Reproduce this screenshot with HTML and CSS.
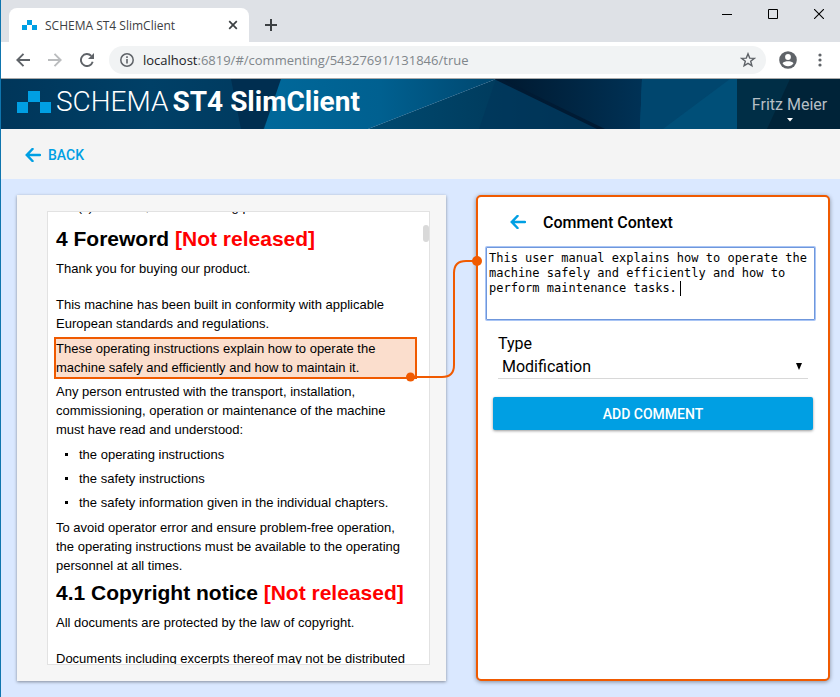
FILE: index.html
```html
<!DOCTYPE html>
<html lang="en">
<head>
<meta charset="utf-8">
<meta name="viewport" content="width=device-width, initial-scale=1">
<title>SCHEMA ST4 SlimClient</title>
<link rel="stylesheet" href="styles.css">
</head>
<body>
<div class="tabstrip">
  <div class="tab">
    <svg class="favicon" width="15" height="10" viewBox="0 0 15 10" aria-hidden="true"><path fill="#009fe3" d="M5 0h5v5H5zM0 5h5v5H0zM10 5h5v5h-5z"/></svg>
    <span class="tab-title">SCHEMA ST4 SlimClient</span>
    <button class="icon-btn" aria-label="Close tab"><svg width="10" height="10" viewBox="0 0 10 10"><path d="M1.2 1.2l7.6 7.6M8.800 1.2l-7.6 7.6" stroke="#3c4043" stroke-width="1.7"/></svg></button>
  </div>
  <button class="icon-btn new-tab" aria-label="New tab"><svg width="12" height="12" viewBox="0 0 12 12"><path d="M6 0v12M0 6h12" stroke="#3c4043" stroke-width="2"/></svg></button>
  <div class="window-controls">
    <button class="icon-btn" aria-label="Minimize"><svg width="10" height="10" viewBox="0 0 10 10"><path d="M0 5.500h10" stroke="#000"/></svg></button>
    <button class="icon-btn" aria-label="Maximize"><svg width="10" height="10" viewBox="0 0 10 10"><path d="M.5.5h9v9h-9z" fill="none" stroke="#000"/></svg></button>
    <button class="icon-btn" aria-label="Close"><svg width="10" height="10" viewBox="0 0 10 10"><path d="M0 0l10 10M10 0L0 10" stroke="#000" stroke-width="1.1"/></svg></button>
  </div>
</div>
<div class="toolbar">
  <button class="icon-btn" aria-label="Back"><svg width="14" height="14" viewBox="0 0 14 14"><path d="M14 7H1.500M7.500 .8L1.300 7l6.200 6.200" fill="none" stroke="#5f6368" stroke-width="1.9"/></svg></button>
  <button class="icon-btn" aria-label="Forward"><svg width="14" height="14" viewBox="0 0 14 14"><path d="M0 7h12.500M6.500 .8L12.700 7l-6.200 6.200" fill="none" stroke="#babcbe" stroke-width="1.900"/></svg></button>
  <button class="icon-btn" aria-label="Reload"><svg width="14" height="14" viewBox="0 0 14 14"><path d="M12.700 8.800A6 6 0 1 1 11.300 2.900" fill="none" stroke="#5f6368" stroke-width="1.900"/><path d="M14 0v6H8z" fill="#5f6368"/></svg></button>
  <div class="omnibox">
    <svg width="14" height="14" viewBox="0 0 14 14" aria-hidden="true"><circle cx="7" cy="7" r="6.200" fill="none" stroke="#5f6368" stroke-width="1.500"/><path d="M7 6v4.500M7 3.300v1.700" stroke="#5f6368" stroke-width="1.600"/></svg>
    <span class="url"><b>localhost</b>:6819/#/commenting/54327691/131846/true</span>
    <button class="icon-btn" aria-label="Bookmark"><svg width="16" height="16" viewBox="0 0 16 16"><path d="M8 1.800l1.700 4.300 4.600.3-3.600 2.900 1.200 4.500L8 11.300l-3.900 2.500 1.200-4.500L1.700 6.400l4.600-.3z" fill="none" stroke="#5f6368" stroke-width="1.400"/></svg></button>
  </div>
  <button class="icon-btn" aria-label="Profile"><svg width="18" height="18" viewBox="0 0 18 18"><circle cx="9" cy="9" r="8.800" fill="#5f6368"/><circle cx="9" cy="6" r="2.900" fill="#fff"/><path d="M3.500 12.300C4.500 10.700 7 10.200 9 10.200s4.500.5 5.500 2.100C13.300 14.200 11.300 15.300 9 15.300s-4.300-1.100-5.500-3z" fill="#fff"/></svg></button>
  <button class="icon-btn menu" aria-label="Menu"><svg width="4" height="14" viewBox="0 0 4 14"><g fill="#5f6368"><circle cx="2" cy="2" r="1.600"/><circle cx="2" cy="7" r="1.600"/><circle cx="2" cy="12" r="1.600"/></g></svg></button>
</div>

<header class="app-header">
  <svg class="backdrop" viewBox="0 0 839 50" preserveAspectRatio="none" aria-hidden="true">
    <defs>
      <linearGradient id="a"><stop offset="0" stop-color="#00365a"/><stop offset=".5" stop-color="#004067"/><stop offset="1" stop-color="#00385c"/></linearGradient>
      <linearGradient id="b"><stop offset="0" stop-color="#00689a"/><stop offset=".5" stop-color="#006090"/><stop offset="1" stop-color="#00476f"/></linearGradient>
      <linearGradient id="c"><stop offset="0" stop-color="#00182e"/><stop offset="1" stop-color="#003256"/></linearGradient>
      <linearGradient id="d"><stop offset="0" stop-color="#004a70"/><stop offset="1" stop-color="#00304f"/></linearGradient>
    </defs>
    <path fill="url(#a)" d="M0 0h300v50H0z"/>
    <path fill="#002e50" d="M230 0h52l-20 50h-22z"/>
    <path fill="url(#b)" d="M280 0h215L367 50H263z"/>
    <path fill="url(#d)" d="M495 0L367 50h235z"/>
    <path fill="#00365a" opacity=".6" d="M495 0l-17 50h124z"/>
    <path fill="url(#c)" d="M495 0h147v50h-40z"/>
    <path fill="#001b34" d="M493 0h8l103 50h-8z"/>
    <path fill="#004f78" d="M641 0h198v50H639z"/>
    <path fill="#00466e" d="M641 0h88l-67 50h-23z"/>
    <path fill="#002e46" d="M736 0h103v50H736z"/>
    <path fill="#002338" d="M789 0h50v50h-73z"/>
  </svg>
  <div class="brand">
    <svg width="34" height="22" viewBox="0 0 34 22" aria-hidden="true"><path fill="#009fe3" d="M11 0h12v11H11zM0 11h11v11H0zM23 11h11v11H23z"/></svg>
    <span class="brand-text"><span class="thin">SCHEMA</span><b>ST4 SlimClient</b></span>
  </div>
  <button class="user">Fritz Meier<svg width="6" height="4" viewBox="0 0 6 4" aria-hidden="true"><path d="M0 0h6L3 3.500z" fill="#fff"/></svg></button>
</header>

<nav class="backbar">
  <a href="#"><svg width="16" height="14" viewBox="0 0 16 14" aria-hidden="true"><path d="M15 7H2M7.500 1L1.800 7l5.700 6" fill="none" stroke="#009fe3" stroke-width="2.500" stroke-linecap="round"/></svg>BACK</a>
</nav>

<main>
  <section class="doc-panel">
    <article class="doc">
      <p class="cut">&nbsp; &nbsp; &nbsp; (s) machine, commissioning parts</p>
      <h2>4 Foreword <em>[Not released]</em></h2>
      <p>Thank you for buying our product.</p>
      <p class="spaced">This machine has been built in conformity with applicable European standards and regulations.</p>
      <p class="marked">These operating instructions explain how to operate the machine safely and efficiently and how to maintain it.</p>
      <p>Any person entrusted with the transport, installation, commissioning, operation or maintenance of the machine must have read and understood:</p>
      <ul>
        <li>the operating instructions</li>
        <li>the safety instructions</li>
        <li>the safety information given in the individual chapters.</li>
      </ul>
      <p>To avoid operator error and ensure problem-free operation, the operating instructions must be available to the operating personnel at all times.</p>
      <h2>4.1 Copyright notice <em>[Not released]</em></h2>
      <p>All documents are protected by the law of copyright.</p>
      <p class="spaced">Documents including excerpts thereof may not be distributed</p>
      <span class="thumb"></span>
    </article>
  </section>

  <section class="comment-panel">
    <svg class="connector" width="76" height="128" viewBox="0 0 76 128" aria-hidden="true">
      <path d="M4 122h32q12 0 12-12V18q0-12 12-12h11" fill="none" stroke="#f05a00" stroke-width="2"/>
      <circle cx="4.500" cy="122" r="4.500" fill="#f05a00"/><circle cx="71" cy="6" r="5" fill="#f05a00"/>
    </svg>
    <div class="comment-head">
      <a href="#" aria-label="Back"><svg width="16" height="14" viewBox="0 0 16 14"><path d="M15 7H2M7.500 1L1.800 7l5.700 6" fill="none" stroke="#009fe3" stroke-width="2.500" stroke-linecap="round"/></svg></a>
      <h1 id="context">Comment Context</h1>
    </div>
    <div class="field">
      <textarea aria-labelledby="context">This user manual explains how to operate the
machine safely and efficiently and how to
perform maintenance tasks.</textarea>
      <span class="caret"></span>
    </div>
    <div class="type">
      <label for="type">Type</label>
      <div class="select-wrap">
        <select id="type"><option>Modification</option></select>
        <svg width="6" height="7" viewBox="0 0 6 7" aria-hidden="true"><path d="M0 0h6L3 7z"/></svg>
      </div>
    </div>
    <button class="primary">ADD COMMENT</button>
  </section>
</main>
</body>
</html>
```
FILE: styles.css
```css
* { box-sizing: border-box; }

body {
  margin: 0;
  height: 100vh;
  display: flex;
  flex-direction: column;
  border-left: 1px solid #0f75ae;
  background: #dae8ff;
  color: #000;
  font-family: Roboto, "Liberation Sans", sans-serif;
  font-size: 16px;
  overflow: hidden;
}

button, select, textarea { font: inherit; border: 0; }
h1, h2, p, ul { margin: 0; padding: 0; }
svg { display: block; flex: none; }
a { color: #009fe3; text-decoration: none; }

.icon-btn { padding: 0; background: none; flex: none; }

/* Browser frame */
.tabstrip {
  display: flex;
  flex: none;
  height: 42px;
  padding-left: 8px;
  background: #dee1e6;
}
.tab {
  display: flex;
  align-items: center;
  width: 240px;
  margin-top: 8px;
  padding: 0 11px 0 13px;
  border-radius: 8px 8px 0 0;
  background: #fff;
}
.tab-title {
  flex: 1;
  margin-left: 8px;
  color: #3c4043;
  font-family: "Open Sans", "Noto Sans", sans-serif;
  font-size: 12px;
}
.new-tab { margin: 8px 0 0 16px; }
.window-controls {
  display: flex;
  align-items: flex-start;
  gap: 36px;
  margin-left: auto;
  padding: 9px 16px 0 0;
}
.toolbar {
  display: flex;
  align-items: center;
  flex: none;
  height: 37px;
  gap: 18px;
  padding: 0 18px 0 15px;
  border-bottom: 1px solid #a9a9a9;
  background: #fff;
}
.omnibox {
  display: flex;
  align-items: center;
  flex: 1;
  height: 28px;
  margin: 0 -5px 0 -3px;
  padding: 0 10px 0 11px;
  border-radius: 14px;
  background: #f1f3f4;
}
.url {
  flex: 1;
  margin-left: 9px;
  color: #80868b;
  font-family: "Open Sans", "Noto Sans", sans-serif;
  font-size: 13px;
}
.url b { color: #202124; font-weight: 400; }
.menu { margin-left: 3px; }

/* Application header */
.app-header {
  position: relative;
  display: flex;
  flex: none;
  justify-content: space-between;
  height: 50px;
}
.backdrop {
  position: absolute;
  inset: 0;
  width: 100%;
  height: 100%;
}
.brand {
  position: relative;
  display: flex;
  align-items: center;
  gap: 5px;
  padding: 0 0 4px 16px;
  color: #fff;
}
.brand-text {
  display: flex;
  gap: 4px;
  font-size: 28px;
  line-height: 32px;
  white-space: nowrap;
}
.thin { font-weight: 300; }
.user {
  position: relative;
  display: flex;
  flex-direction: column;
  align-items: center;
  width: 103px;
  padding: 16px 0 0 2px;
  background: none;
  color: #b6bfc5;
  line-height: 19px;
}
.user svg { margin-top: 4px; }

.backbar {
  display: flex;
  flex: none;
  align-items: center;
  height: 50px;
  padding: 2px 0 0 24px;
  background: #f4f4f4;
}
.backbar a {
  display: flex;
  align-items: center;
  gap: 7px;
  font-size: 14px;
  font-weight: 500;
}

/* Work area */
main {
  display: grid;
  grid-template-columns: minmax(0, 429fr) minmax(0, 354fr);
  grid-template-rows: minmax(0, 1fr);
  gap: 30px;
  flex: 1;
  min-height: 0;
  padding: 16px 10px 16px 16px;
}
.doc-panel {
  padding: 16px 16px 16px 30px;
  background: #f6f6f6;
  box-shadow: 0 1px 3px rgba(0, 0, 0, .4);
}
.doc {
  position: relative;
  height: 100%;
  padding: 0 14px 0 8px;
  border: 1px solid #e2e2e2;
  background: #fff;
  overflow: hidden;
  font-family: "Liberation Sans", Arial, sans-serif;
  font-size: 13px;
  line-height: 19px;
}
.doc p { margin-bottom: 6px; }
.doc .cut { margin: -15px 0 11px; }
.doc .spaced { margin-top: 17px; }
.doc h2 {
  margin: 3px 0 8px;
  font-size: 21px;
  line-height: 24px;
}
.doc em { color: #f00; font-style: normal; }
.doc .marked {
  margin-bottom: 5px;
  background: #fbdecd;
  outline: 2px solid #f05a00;
}
.doc ul { list-style: none; }
.doc li {
  display: flex;
  align-items: center;
  gap: 11px;
  margin-bottom: 5px;
  padding-left: 9px;
}
.doc li::before {
  content: "";
  width: 3px;
  height: 3px;
  background: #000;
}
.doc li:last-child { margin-bottom: 6px; }
.thumb {
  position: absolute;
  top: 13px;
  right: 0;
  width: 6px;
  height: 17px;
  border-radius: 3px;
  background: #d9d9d9;
}

.comment-panel {
  position: relative;
  display: flex;
  flex-direction: column;
  border: 2px solid #f05a00;
  border-radius: 5px;
  background: #fff;
  box-shadow: 0 1px 4px rgba(0, 0, 0, .4);
}
.connector {
  position: absolute;
  top: 58px;
  left: -72px;
}
.comment-head {
  display: flex;
  align-items: center;
  gap: 17px;
  height: 50px;
  padding-left: 32px;
}
.comment-head h1 { font-size: 16px; font-weight: 500; }
.field {
  position: relative;
  margin: 0 13px 0 8px;
}
.field textarea {
  display: block;
  width: 100%;
  height: 73px;
  padding: 3px 2px;
  border: 1px solid #6f97dc;
  border-radius: 1px;
  outline: 0;
  box-shadow: 0 0 0 1px #a9c5f5;
  resize: none;
  overflow: hidden;
  font-family: "DejaVu Sans Mono", "Liberation Mono", monospace;
  font-size: 12px;
  line-height: 15px;
}
.caret {
  position: absolute;
  top: 34px;
  left: 194px;
  width: 1px;
  height: 15px;
  background: #000;
}
.type {
  margin: 12px 20px 0;
  border-bottom: 1px solid #d8d8d8;
}
.type label { display: block; line-height: 23px; }
.select-wrap {
  position: relative;
  line-height: 23px;
}
.select-wrap select {
  width: 100%;
  height: 23px;
  padding: 0 4px;
  background: none;
  appearance: none;
}
.select-wrap svg {
  position: absolute;
  top: 8px;
  right: 6px;
}
.primary {
  height: 33px;
  margin: 18px 15px 0;
  padding: 0;
  border-radius: 2px;
  background: #009fe3;
  box-shadow: 0 1px 3px rgba(0, 0, 0, .4);
  color: #fff;
  font-size: 14px;
  font-weight: 500;
}
```
